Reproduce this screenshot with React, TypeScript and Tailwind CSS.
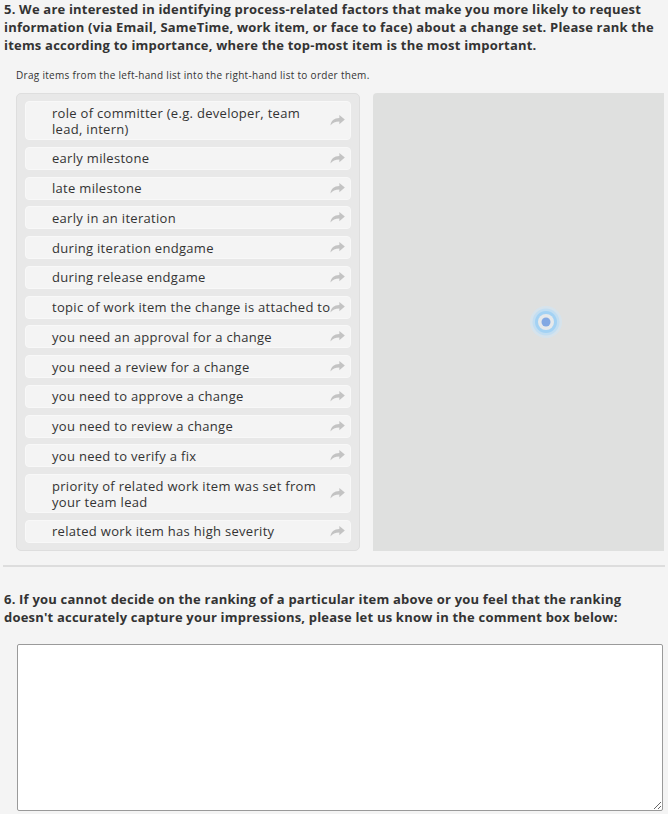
import React from "react";

// each entry is one rendered line, so wrapping matches the screenshot
const items: string[][] = [
  ["role of committer (e.g. developer, team", "lead, intern)"],
  ["early milestone"],
  ["late milestone"],
  ["early in an iteration"],
  ["during iteration endgame"],
  ["during release endgame"],
  ["topic of work item the change is attached to"],
  ["you need an approval for a change"],
  ["you need a review for a change"],
  ["you need to approve a change"],
  ["you need to review a change"],
  ["you need to verify a fix"],
  ["priority of related work item was set from", "your team lead"],
  ["related work item has high severity"],
];

function ShareArrow() {
  return (
    <svg width="15" height="11" viewBox="0 0 16 12" className="shrink-0">
      <path
        d="M10 0 L16 5 L10 10 V7 C5.5 7 2.5 8.3 0.3 11.5 C1 6.5 4.2 3.6 10 3.4 Z"
        fill="#c3c3c3"
      />
    </svg>
  );
}

function Spinner() {
  return (
    <svg width="34" height="34" viewBox="0 0 34 34">
      <circle cx="17" cy="17" r="16" fill="#d6e3ec" />
      <circle cx="17" cy="17" r="13.5" fill="#c2def2" />
      <circle cx="17" cy="17" r="11" fill="#a3d2f4" />
      <circle cx="17" cy="17" r="8" fill="#e6e9eb" />
      <circle cx="17" cy="17" r="4.5" fill="#82a8e3" />
    </svg>
  );
}

export default function App() {
  return (
    <div
      className="min-h-screen bg-[#f4f4f4] text-[#333] overflow-hidden tracking-[0.3px]"
      style={{ fontFamily: "'Open Sans', 'DejaVu Sans', sans-serif" }}
    >
      {/* Question 5 */}
      <div className="px-[4px] text-[13px] font-bold leading-[18px] whitespace-nowrap tracking-[0.2px]">
        5. We are interested in identifying process-related factors that make
        you more likely to request
        <br />
        information (via Email, SameTime, work item, or face to face) about a
        change set. Please rank the
        <br />
        items according to importance, where the top-most item is the most
        important.
      </div>

      <div className="ml-[16px] mt-[14px] text-[10px] leading-[14px]">
        Drag items from the left-hand list into the right-hand list to order
        them.
      </div>

      {/* Ranking lists */}
      <div className="flex mt-[11px]">
        <div className="ml-[16px] w-[344px] h-[458px] shrink-0 bg-[#e8e8e8] border border-[#dedede] rounded-[5px] pt-[7px] px-[8px] flex flex-col gap-[6.75px]">
          {items.map((lines) => (
            <div
              key={lines[0]}
              className="flex items-center bg-[#f4f4f4] border border-[#f8f8f8] rounded-[4px] pl-[26px] pr-[5px] py-[2.5px]"
            >
              <span className="flex-1 min-w-0 text-[13px] leading-[16px] whitespace-nowrap">
                {lines[0]}
                {lines[1] && (
                  <>
                    <br />
                    {lines[1]}
                  </>
                )}
              </span>
              <ShareArrow />
            </div>
          ))}
        </div>
        <div className="ml-[13px] w-[291px] h-[458px] shrink-0 bg-[#dfe0df] rounded-tl-[4px] flex items-center justify-center pl-[54px]">
          <Spinner />
        </div>
      </div>

      <div className="mx-[3px] mt-[14px] h-[2px] bg-[#dddddd]" />

      {/* Question 6 */}
      <div className="px-[4px] mt-[23px] text-[13px] font-bold leading-[18px] whitespace-nowrap tracking-[0.2px]">
        6. If you cannot decide on the ranking of a particular item above or you
        feel that the ranking
        <br />
        doesn't accurately capture your impressions, please let us know in the
        comment box below:
      </div>

      <div className="ml-[17px] mr-[5px] mt-[18px]">
        <textarea className="block w-full h-[167px] bg-white border border-[#9a9a9a] rounded-[2px] outline-none" />
      </div>
    </div>
  );
}
